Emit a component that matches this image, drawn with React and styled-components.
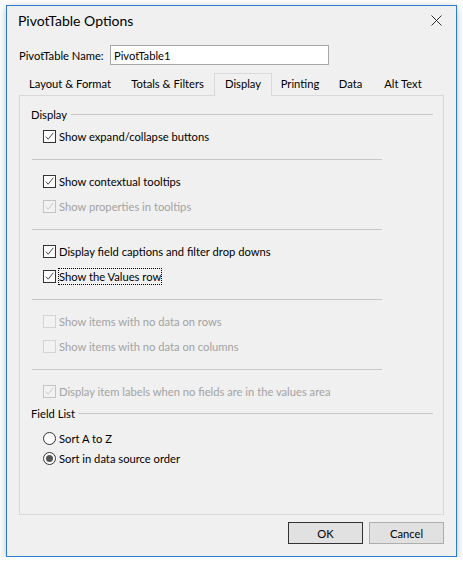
import React from 'react';
import styled, { createGlobalStyle } from 'styled-components';

const Global = createGlobalStyle`
  html, body {
    margin: 0;
    padding: 0;
    background: #ffffff;
  }
  body {
    font-family: Lato, "Noto Sans", sans-serif;
    font-size: 11.2px;
    color: #000;
  }
`;

const Window = styled.div`
  margin: 5px 0 0 6px;
  width: 449px;
  height: 550px;
  border: 1px solid #2b7bd0;
  background: #f0f0f0;
  box-shadow: 0 2px 8px rgba(0, 0, 0, 0.25);
  display: flex;
  flex-direction: column;
`;

const TitleBar = styled.div`
  height: 30px;
  box-sizing: border-box;
  display: flex;
  align-items: center;
  justify-content: space-between;
  padding: 0 14px 2px 11px;
`;

const Title = styled.div`
  font-size: 14px;
  color: #000;
`;

const CloseIcon = () => (
  <svg width="11" height="11" viewBox="0 0 11 11">
    <path d="M0.5 0.5 L10.5 10.5 M10.5 0.5 L0.5 10.5" stroke="#333" strokeWidth="1" fill="none" />
  </svg>
);

const Body = styled.div`
  flex: 1;
  padding: 9px 12px 12px 12px;
  display: flex;
  flex-direction: column;
`;

const NameRow = styled.div`
  display: flex;
  align-items: center;
  height: 20px;
`;

const NameLabel = styled.span`
  width: 91px;
`;

const NameInput = styled.div`
  width: 214px;
  height: 18px;
  border: 1px solid #a8a8a8;
  background: #fff;
  display: flex;
  align-items: center;
  padding-left: 3px;
`;

const TabStrip = styled.div`
  display: flex;
  margin-top: 8px;
  height: 22px;
  position: relative;
  z-index: 1;
`;

const Tab = styled.div`
  width: ${p => p.w}px;
  box-sizing: border-box;
  display: flex;
  align-items: center;
  justify-content: center;
  padding-bottom: 3px;
  height: ${p => (p.active ? 23 : 22)}px;
  border: 1px solid ${p => (p.active ? '#d9d9d9' : 'transparent')};
  border-bottom: none;
  background: ${p => (p.active ? '#f0f0f0' : 'transparent')};
`;

const Panel = styled.div`
  height: 420px;
  box-sizing: border-box;
  border: 1px solid #d9d9d9;
  padding: 10px 10px 0 11px;
`;

const GroupHeader = styled.div`
  display: flex;
  align-items: center;
  height: 16px;
  gap: 4px;
  margin-top: ${p => p.mt || 0}px;
  margin-bottom: ${p => p.mb || 0}px;
  &::after {
    content: "";
    flex: 1;
    height: 1px;
    background: #c8c8c8;
  }
`;

const Row = styled.label`
  display: flex;
  align-items: center;
  height: ${p => p.h || 25}px;
  padding-left: 12px;
  gap: 3px;
  margin-top: ${p => p.mt || 0}px;
  color: ${p => (p.disabled ? '#a3a3a3' : '#000')};
`;

const Separator = styled.div`
  height: 1px;
  width: 350px;
  margin: 10px 0 9px 1px;
  background: #c8c8c8;
`;

const Box = styled.span`
  width: 13px;
  height: 13px;
  box-sizing: border-box;
  border: 1px solid ${p => (p.disabled ? (p.checked ? '#c4c4c4' : '#d4d4d4') : '#333')};
  background: ${p => (p.disabled ? '#f2f2f2' : '#fff')};
  display: flex;
  align-items: center;
  justify-content: center;
  flex-shrink: 0;
`;

const Text = styled.span`
  outline: ${p => (p.focus ? '1px dotted #000' : 'none')};
  outline-offset: 0;
  line-height: 15px;
`;

const Check = ({ color }) => (
  <svg width="11" height="11" viewBox="0 0 11 11">
    <path d="M1.8 5.6 L4.2 8.2 L9.3 1.8" stroke={color} strokeWidth="0.9" fill="none" />
  </svg>
);

const CheckRow = ({ label, checked, disabled, focus }) => (
  <Row disabled={disabled}>
    <Box checked={checked} disabled={disabled}>
      {checked && <Check color={disabled ? '#c4c4c4' : '#333'} />}
    </Box>
    <Text focus={focus}>{label}</Text>
  </Row>
);

const Circle = styled.span`
  width: 13px;
  height: 13px;
  box-sizing: border-box;
  border-radius: 50%;
  border: 1px solid #333;
  background: #fff;
  display: flex;
  align-items: center;
  justify-content: center;
  flex-shrink: 0;
  &::after {
    content: "";
    display: ${p => (p.on ? 'block' : 'none')};
    width: 7px;
    height: 7px;
    border-radius: 50%;
    background: #555;
  }
`;

const Footer = styled.div`
  display: flex;
  justify-content: flex-end;
  gap: 6px;
  margin-top: 7px;
`;

const Button = styled.div`
  width: 75px;
  height: 22px;
  box-sizing: border-box;
  border: 1px solid ${p => (p.primary ? '#333' : '#adadad')};
  background: #e1e1e1;
  display: flex;
  align-items: center;
  justify-content: center;
`;

const tabs = [
  ['Layout & Format', 102],
  ['Totals & Filters', 93],
  ['Display', 58],
  ['Printing', 56],
  ['Data', 45],
  ['Alt Text', 60],
];

export default function App() {
  return (
    <>
      <Global />
      <Window>
        <TitleBar>
          <Title>PivotTable Options</Title>
          <CloseIcon />
        </TitleBar>
        <Body>
          <NameRow>
            <NameLabel>PivotTable Name:</NameLabel>
            <NameInput>PivotTable1</NameInput>
          </NameRow>
          <TabStrip>
            {tabs.map(([t, w]) => (
              <Tab key={t} w={w} active={t === 'Display'}>{t}</Tab>
            ))}
          </TabStrip>
          <Panel>
            <GroupHeader mb={2}>Display</GroupHeader>
            <CheckRow label="Show expand/collapse buttons" checked />
            <Separator />
            <CheckRow label="Show contextual tooltips" checked />
            <CheckRow label="Show properties in tooltips" checked disabled />
            <Separator />
            <CheckRow label="Display field captions and filter drop downs" checked />
            <CheckRow label="Show the Values row" checked focus />
            <Separator />
            <CheckRow label="Show items with no data on rows" disabled />
            <CheckRow label="Show items with no data on columns" disabled />
            <Separator />
            <CheckRow label="Display item labels when no fields are in the values area" checked disabled />
            <GroupHeader mt={1}>Field List</GroupHeader>
            <Row h={20} mt={7}>
              <Circle />
              <span>Sort A to Z</span>
            </Row>
            <Row h={20}>
              <Circle on />
              <span>Sort in data source order</span>
            </Row>
          </Panel>
          <Footer>
            <Button primary>OK</Button>
            <Button>Cancel</Button>
          </Footer>
        </Body>
      </Window>
    </>
  );
}
